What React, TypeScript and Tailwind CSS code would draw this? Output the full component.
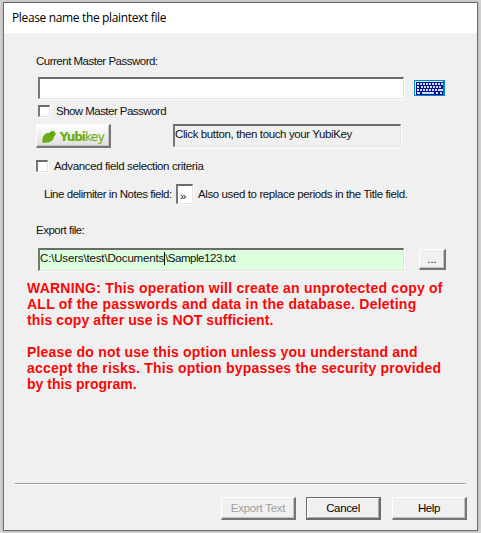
import type { ReactNode } from "react";

const sunken =
  "border-t-2 border-l-2 border-r border-b border-t-[#6b6b6b] border-l-[#777777] border-r-[#e3e3e3] border-b-[#e3e3e3] shadow-[1px_1px_0_#fcfcfc]";
const raised =
  "border-t border-l border-r-2 border-b-2 border-t-white border-l-white border-r-[#757575] border-b-[#757575] shadow-[inset_-1px_-1px_0_#c2c2c2]";

function Checkbox({ label, textClass }: { label: string; textClass: string }) {
  return (
    <label className="flex h-3 items-center gap-[6px]">
      <span className={`h-3 w-3 shrink-0 bg-white ${sunken}`} />
      <span className={textClass}>{label}</span>
    </label>
  );
}

function PushButton({ className, children }: { className: string; children: ReactNode }) {
  return (
    <button className={`flex items-center justify-center ${className}`}>
      {children}
    </button>
  );
}

const keyRows = [
  { y: 3, keys: [3, 6, 9, 12, 15, 18, 21, 24, 27] },
  { y: 6, keys: [3, 7, 10, 13, 16, 19, 22, 25] },
  { y: 9, keys: [3, 6, 9, 12, 15, 18, 21] },
];

function KeyboardIcon() {
  return (
    <svg width="31" height="16" viewBox="0 0 31 16" shapeRendering="crispEdges">
      <rect width="31" height="16" fill="#0086c8" />
      <rect x="1" y="1" width="29" height="14" fill="#d8f2fb" />
      <rect x="2" y="2" width="28" height="13" fill="#00128c" />
      <rect x="29" y="1" width="1" height="14" fill="#087fc4" />
      {keyRows.map(({ y, keys }) =>
        keys.map((x) => <rect key={`${y}-${x}`} x={x} y={y} width="2" height="2" fill="#d5d9ec" />),
      )}
      <rect x="24" y="9" width="5" height="2" fill="#d5d9ec" />
      <rect x="3" y="12" width="3" height="2" fill="#d5d9ec" />
      <rect x="8" y="12" width="12" height="2" fill="#d5d9ec" />
      <rect x="22" y="12" width="2" height="2" fill="#d5d9ec" />
      <rect x="26" y="12" width="2" height="2" fill="#d5d9ec" />
    </svg>
  );
}

function YubikeyMark() {
  return (
    <svg width="14" height="14" viewBox="0 0 14 14">
      <path
        d="M.6 13.3 L.4 9.5 L1.2 6.2 L3.4 3.8 L6 2.8 L7.2 3.2 L9.8 .7 L12.6 1.5 L13.7 3.6 L13.4 5.1 L11.6 6.8 L11.8 8.4 L9.6 11 L6.5 12.6 L3.2 12.5 Z"
        fill="#68ad12"
      />
      <path d="M7.4 3.3 C9.4 3.6 10.8 4.9 11.5 6.7" fill="none" stroke="#438c08" strokeWidth="1" />
    </svg>
  );
}

export default function App() {
  return (
    <div className="h-[533px] w-[481px] overflow-hidden bg-[#d5d5d5] pt-[2px] pl-[3px] font-['Liberation_Sans',Arial,sans-serif] text-[11.5px] leading-3 whitespace-nowrap text-[#101010]">
      <div className="flex h-[529px] w-[475px] flex-col border border-[#6c6c6c] bg-[#f0f0f0] shadow-[0_0_4px_#aaa]">
        <header className="flex h-[30px] shrink-0 items-center bg-white pl-2 font-['Open_Sans','Noto_Sans',sans-serif] text-[12px] text-black">
          <span className="tracking-[-0.35px]">Please name the plaintext file</span>
        </header>

        <main className="flex flex-1 flex-col pt-[22px]">
          <label className="pl-8 tracking-[-0.5px]">Current Master Password:</label>
          <div className="mt-[10px] flex h-[22px] items-center pl-[34px]">
            <div className={`h-[22px] w-[366px] bg-white ${sunken}`} />
            <div className="ml-[10px]">
              <KeyboardIcon />
            </div>
          </div>

          <div className="mt-[6px] pl-[34px]">
            <Checkbox label="Show Master Password" textClass="tracking-[-0.54px]" />
          </div>

          <div className="mt-[7px] flex h-6 pl-8">
            <PushButton className={`h-6 w-[75px] gap-[4px] bg-linear-to-b from-white to-[#dedede] pt-[3px] ${raised}`}>
              <YubikeyMark />
              <span className="font-['DejaVu_Sans',sans-serif] text-[12px] tracking-[-0.6px] text-[#68ad12]">
                <b className="tracking-[-1px]">Yubi</b>key
              </span>
            </PushButton>
            <div className={`ml-[62px] h-[23px] w-[228px] pt-[2px] ${sunken}`}>
              <span className="tracking-[-0.38px]">Click button, then touch your YubiKey</span>
            </div>
          </div>

          <div className="mt-3 pl-8">
            <Checkbox label="Advanced field selection criteria" textClass="tracking-[-0.37px]" />
          </div>

          <div className="mt-3 flex h-[20px] items-center pl-10">
            <span className="w-[132px] tracking-[-0.45px]">Line delimiter in Notes field:</span>
            <div className={`flex h-[20px] w-[17px] items-end bg-white pb-px pl-[2px] ${sunken}`}>»</div>
            <span className="ml-[5px] tracking-[-0.39px]">Also used to replace periods in the Title field.</span>
          </div>

          <label className="mt-5 pl-8 tracking-[-0.5px]">Export file:</label>
          <div className="mt-[12px] flex h-[23px] items-center pl-[34px]">
            <div className={`flex h-[23px] w-[366px] bg-[#ddffdd] pt-[2px] ${sunken}`}>
              <span className="tracking-[-0.16px]">C:\Users\test\Documents</span>
              <span className="h-[13px] w-px bg-black" />
              <span className="tracking-[-0.47px]">\Sample123.txt</span>
            </div>
            <PushButton className={`ml-[15px] h-[21px] w-[27px] ${raised}`}>...</PushButton>
          </div>

          <section className="mt-[9px] flex flex-col gap-4 pl-[23px] text-[14px] leading-4 font-bold text-[#f80808]">
            <p>
              <span className="tracking-[0.22px]">WARNING: This operation will create an unprotected copy of</span>
              <br />
              <span className="tracking-[0.24px]">ALL of the passwords and data in the database. Deleting</span>
              <br />
              <span className="tracking-[0.1px]">this copy after use is NOT sufficient.</span>
            </p>
            <p>
              <span className="tracking-[0.19px]">Please do not use this option unless you understand and</span>
              <br />
              <span className="tracking-[0.2px]">accept the risks. This option bypasses the security provided</span>
              <br />
              <span className="tracking-[0px]">by this program.</span>
            </p>
          </section>
        </main>

        <footer className="h-[47px] shrink-0">
          <div className="mr-[11px] ml-[11px] h-[2px] border-t border-b border-t-[#9c9c9c] border-b-white" />
          <div className="mt-3 flex h-[23px] pl-[217px]">
            <PushButton className={`h-[23px] w-[75px] text-[#a0a0a0] ${raised}`}>
              <span className="tracking-[-0.27px]">Export Text</span>
            </PushButton>
            <PushButton className="ml-[10px] h-[23px] w-[75px] border border-r-2 border-b-2 border-[#6c6c6c] text-black shadow-[inset_1px_1px_0_#fff,inset_-1px_-1px_0_#aaa]">
              <span className="tracking-[-0.35px]">Cancel</span>
            </PushButton>
            <PushButton className={`ml-[11px] h-[23px] w-[75px] text-black ${raised}`}>
              <span className="tracking-[-0.4px]">Help</span>
            </PushButton>
          </div>
        </footer>
      </div>
    </div>
  );
}
